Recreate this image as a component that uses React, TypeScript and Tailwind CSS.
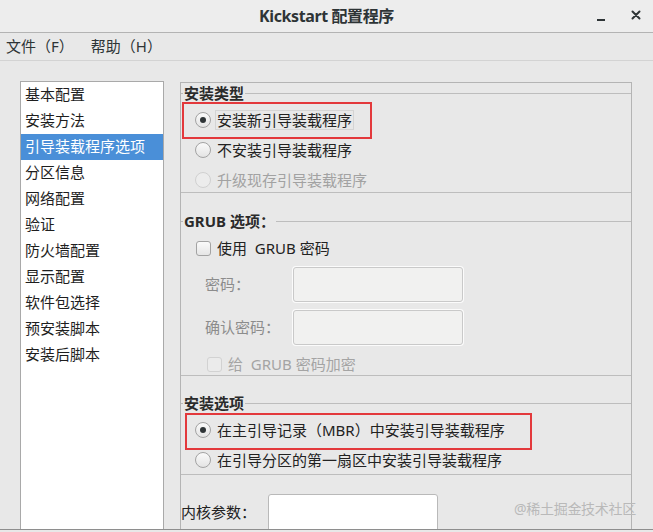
import React from 'react';

const font = "font-['Noto_Sans','Noto_Sans_CJK_SC',sans-serif]";

const navItems = [
  '基本配置',
  '安装方法',
  '引导装载程序选项',
  '分区信息',
  '网络配置',
  '验证',
  '防火墙配置',
  '显示配置',
  '软件包选择',
  '预安装脚本',
  '安装后脚本',
];

function Radio({ checked, disabled }: { checked?: boolean; disabled?: boolean }) {
  return (
    <span
      className={`w-[16px] h-[16px] rounded-full border flex items-center justify-center shrink-0 ${
        disabled ? 'border-[#d0d0d0] bg-[#ececec]' : 'border-[#a3a3a3] bg-gradient-to-b from-[#fafafa] to-[#e4e4e4]'
      }`}
    >
      {checked && <span className="w-[6px] h-[6px] rounded-full bg-[#2e3436]" />}
    </span>
  );
}

function Checkbox({ disabled }: { disabled?: boolean }) {
  return (
    <span
      className={`w-[15px] h-[15px] rounded-[3px] border shrink-0 ${
        disabled ? 'border-[#d2d2d2] bg-[#ebebeb]' : 'border-[#a3a3a3] bg-gradient-to-b from-[#fafafa] to-[#e6e6e6]'
      }`}
    />
  );
}

function GroupLabel({ children }: { children: React.ReactNode }) {
  return (
    <div className="h-[21px] flex items-center">
      <span className="w-[2px] h-px bg-[#b9b9b9]" />
      <span className="px-[1px] font-bold text-[15px] text-[#2a2a2a] leading-none">{children}</span>
      <span className="flex-1 h-px bg-[#bdbdbd]" />
    </div>
  );
}

export default function App() {
  return (
    <div className={`relative w-[653px] h-[532px] bg-[#e8e8e8] flex flex-col overflow-hidden text-[#222] ${font}`}>
      {/* title bar */}
      <div className="relative h-[33px] shrink-0 bg-[#ededed] border-b border-[#b3b3b3] flex items-center justify-center">
        <span className="font-bold text-[16px] text-[#2e3436] tracking-[-0.4px]">Kickstart 配置程序</span>
        <div className="absolute right-[12px] top-0 h-[32px] flex items-center gap-[26px]">
          <span className="w-[8px] h-[2px] bg-[#2e3436] mt-[8px]" />
          <svg width="10" height="10" viewBox="0 0 10 10" className="-mt-[2px]">
            <path d="M1.5 1.5 L8.5 8.5 M8.5 1.5 L1.5 8.5" stroke="#2e3436" strokeWidth="2" strokeLinecap="round" />
          </svg>
        </div>
      </div>

      {/* menu bar */}
      <div className="h-[28px] shrink-0 border-b border-[#d3d3d3] flex items-center pl-[6px] text-[15px] text-[#2e3436]">
        <span>文件（F）</span>
        <span className="ml-[17px]">帮助（H）</span>
      </div>

      {/* content */}
      <div className="flex-1 flex items-stretch pl-[20px] pt-[20px] min-h-0">
        <div className="w-[144px] bg-white border-l border-t border-r border-[#a9a9a9] text-[15px]">
          {navItems.map((item, i) => (
            <div
              key={item}
              className={`h-[26px] flex items-center pl-[4px] pb-[2px] ${i === 2 ? 'bg-[#4a8fd8] text-white' : 'text-[#1e1e1e]'}`}
            >
              {item}
            </div>
          ))}
        </div>

        <div className="ml-[16px] mt-[1px] w-[452px] border-l border-t border-r border-[#b4b4b4] overflow-hidden text-[15px]">
          {/* 安装类型 */}
          <div className="border-b border-[#bdbdbd]">
            <GroupLabel>安装类型</GroupLabel>
            <div className="pt-[5px] pb-[1px] flex flex-col gap-[8px] pl-[14px]">
              <div className="h-[22px] flex items-center gap-[4px]">
                <Radio checked />
                <span className="border border-[#d4d4d4] px-[1px] leading-[18px]">安装新引导装载程序</span>
              </div>
              <div className="h-[22px] flex items-center gap-[6px]">
                <Radio />
                <span>不安装引导装载程序</span>
              </div>
              <div className="h-[22px] flex items-center gap-[6px] text-[#a2a2a2]">
                <Radio disabled />
                <span>升级现存引导装载程序</span>
              </div>
            </div>
          </div>

          {/* GRUB 选项 */}
          <div className="mt-[18px] border-b border-[#bdbdbd]">
            <GroupLabel>GRUB 选项：</GroupLabel>
            <div className="pt-[5px] h-[27px] flex items-center gap-[6px] pl-[15px]">
              <Checkbox />
              <span className="whitespace-pre">使用  GRUB 密码</span>
            </div>
            <div className="mt-[8px] flex items-center pl-[24px] text-[#8c8c8c]">
              <span className="w-[88px]">密码：</span>
              <span className="w-[170px] h-[35px] rounded-[3px] border border-[#c9c9c9] bg-[#f1f1f0] shadow-[0_0_0_1px_#fbfbfb]" />
            </div>
            <div className="mt-[8px] flex items-center pl-[24px] text-[#8c8c8c]">
              <span className="w-[88px]">确认密码：</span>
              <span className="w-[170px] h-[35px] rounded-[3px] border border-[#c9c9c9] bg-[#f1f1f0] shadow-[0_0_0_1px_#fbfbfb]" />
            </div>
            <div className="mt-[8px] h-[22px] flex items-center gap-[6px] pl-[26px] text-[#a4a4a4]">
              <Checkbox disabled />
              <span className="whitespace-pre">给  GRUB 密码加密</span>
            </div>
          </div>

          {/* 安装选项 */}
          <div className="mt-[17px] border-b border-[#bdbdbd]">
            <GroupLabel>安装选项</GroupLabel>
            <div className="pt-[5px] pb-[3px] flex flex-col gap-[8px] pl-[14px]">
              <div className="h-[22px] flex items-center gap-[6px]">
                <Radio checked />
                <span>在主引导记录（MBR）中安装引导装载程序</span>
              </div>
              <div className="h-[22px] flex items-center gap-[6px]">
                <Radio />
                <span>在引导分区的第一扇区中安装引导装载程序</span>
              </div>
            </div>
          </div>

          {/* 内核参数 */}
          <div className="mt-[19px] flex items-start">
            <span className="w-[87px] mt-[7px]">内核参数：</span>
            <span className="w-[170px] h-[40px] rounded-[3px] border border-[#b9b9b9] bg-white" />
          </div>
        </div>
      </div>

      <div className="h-[3px] shrink-0 border-t border-[#8e8e8e] bg-[#e8e8e8]" />

      {/* annotations */}
      <div className="absolute left-[182px] top-[102px] w-[190px] h-[37px] border-2 border-[#e3393c]" />
      <div className="absolute left-[185px] top-[413px] w-[347px] h-[37px] border-2 border-[#e3393c]" />
      <span className="absolute left-[514px] top-[498px] text-[14px] text-[#b9b9b9] tracking-[-0.3px]">@稀土掘金技术社区</span>
    </div>
  );
}
